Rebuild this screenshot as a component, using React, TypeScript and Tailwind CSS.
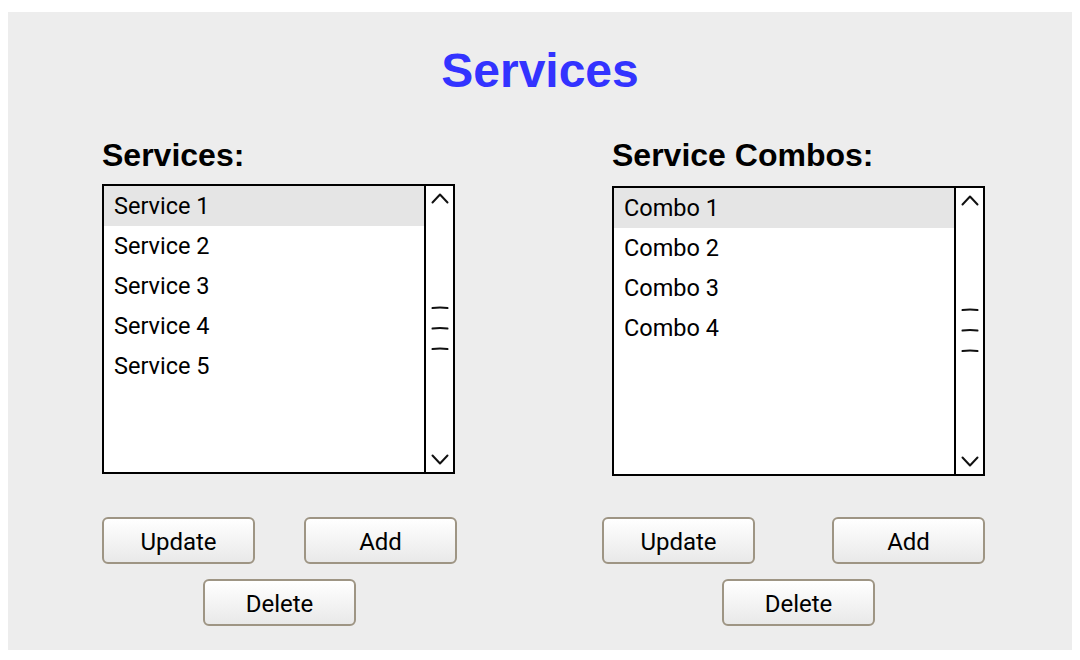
import React from 'react'

const services = ['Service 1', 'Service 2', 'Service 3', 'Service 4', 'Service 5']
const combos = ['Combo 1', 'Combo 2', 'Combo 3', 'Combo 4']

function Chevron({ down = false }: { down?: boolean }) {
  return (
    <svg width="18" height="11" viewBox="0 0 18 11" className="block">
      <path
        d={down ? 'M1.5 1.5 L9 9.5 L16.5 1.5' : 'M1.5 9.5 L9 1.5 L16.5 9.5'}
        fill="none"
        stroke="#111"
        strokeWidth="2"
        strokeLinecap="round"
        strokeLinejoin="round"
      />
    </svg>
  )
}

function Grip() {
  return (
    <svg width="18" height="46" viewBox="0 0 18 46" className="block">
      <path d="M1.5 2 Q9 1 16.5 2" fill="none" stroke="#111" strokeWidth="2" strokeLinecap="round" />
      <path d="M1.5 22.5 Q9 21.5 16.5 22.5" fill="none" stroke="#111" strokeWidth="2" strokeLinecap="round" />
      <path d="M1.5 43 Q9 42 16.5 43" fill="none" stroke="#111" strokeWidth="2" strokeLinecap="round" />
    </svg>
  )
}

function ListBox({ items, className = '' }: { items: string[]; className?: string }) {
  return (
    <div className={`flex h-[290px] border-2 border-black bg-white ${className}`}>
      <div className="flex-1 flex flex-col">
        {items.map((item, i) => (
          <div
            key={item}
            className={`h-[40px] pl-[10px] pt-[2px] flex items-center text-[23.5px] text-black ${i === 0 ? 'bg-[#e5e5e5]' : ''}`}
          >
            {item}
          </div>
        ))}
      </div>
      {/* scrollbar */}
      <div className="w-[29px] border-l-2 border-black flex flex-col items-center pt-[7px] pb-[7px]">
        <Chevron />
        <div className="flex-1 flex items-center justify-center">
          <Grip />
        </div>
        <Chevron down />
      </div>
    </div>
  )
}

function Button({ children }: { children: React.ReactNode }) {
  return (
    <button className="w-[153px] h-[47px] pt-[3px] rounded-[6px] border-2 border-[#9e9584] bg-gradient-to-b from-white to-[#e9e9e9] text-[24px] text-black flex items-center justify-center">
      {children}
    </button>
  )
}

export default function App() {
  return (
    <div className="w-[1080px] h-[660px] bg-white pt-[12px] pl-[8px]" style={{ fontFamily: 'Roboto, "Liberation Sans", sans-serif' }}>
      <div className="w-[1064px] h-[638px] bg-[#ededed] pt-[35px]">
        <h1
          className="h-[48px] leading-[48px] text-center text-[48px] font-bold text-[#3333ff]"
          style={{ fontFamily: '"Liberation Sans", Arial, sans-serif' }}
        >
          Services
        </h1>

        <div className="flex mt-[44px] pl-[94px]">
          {/* left column */}
          <div className="w-[355px] flex flex-col">
            <h2
              className="h-[32px] leading-[32px] text-[32px] font-bold text-black"
              style={{ fontFamily: '"Liberation Sans", Arial, sans-serif' }}
            >
              Services:
            </h2>
            <ListBox items={services} className="mt-[13px] w-[353px]" />
            <div className="mt-[43px] flex justify-between">
              <Button>Update</Button>
              <Button>Add</Button>
            </div>
            <div className="mt-[15px] flex justify-center">
              <Button>Delete</Button>
            </div>
          </div>

          {/* right column */}
          <div className="ml-[155px] w-[373px] flex flex-col">
            <h2
              className="h-[32px] leading-[32px] text-[32px] font-bold text-black"
              style={{ fontFamily: '"Liberation Sans", Arial, sans-serif' }}
            >
              Service Combos:
            </h2>
            <ListBox items={combos} className="mt-[15px]" />
            <div className="mt-[41px] -ml-[10px] flex justify-between">
              <Button>Update</Button>
              <Button>Add</Button>
            </div>
            <div className="mt-[15px] flex justify-center">
              <Button>Delete</Button>
            </div>
          </div>
        </div>
      </div>
    </div>
  )
}
